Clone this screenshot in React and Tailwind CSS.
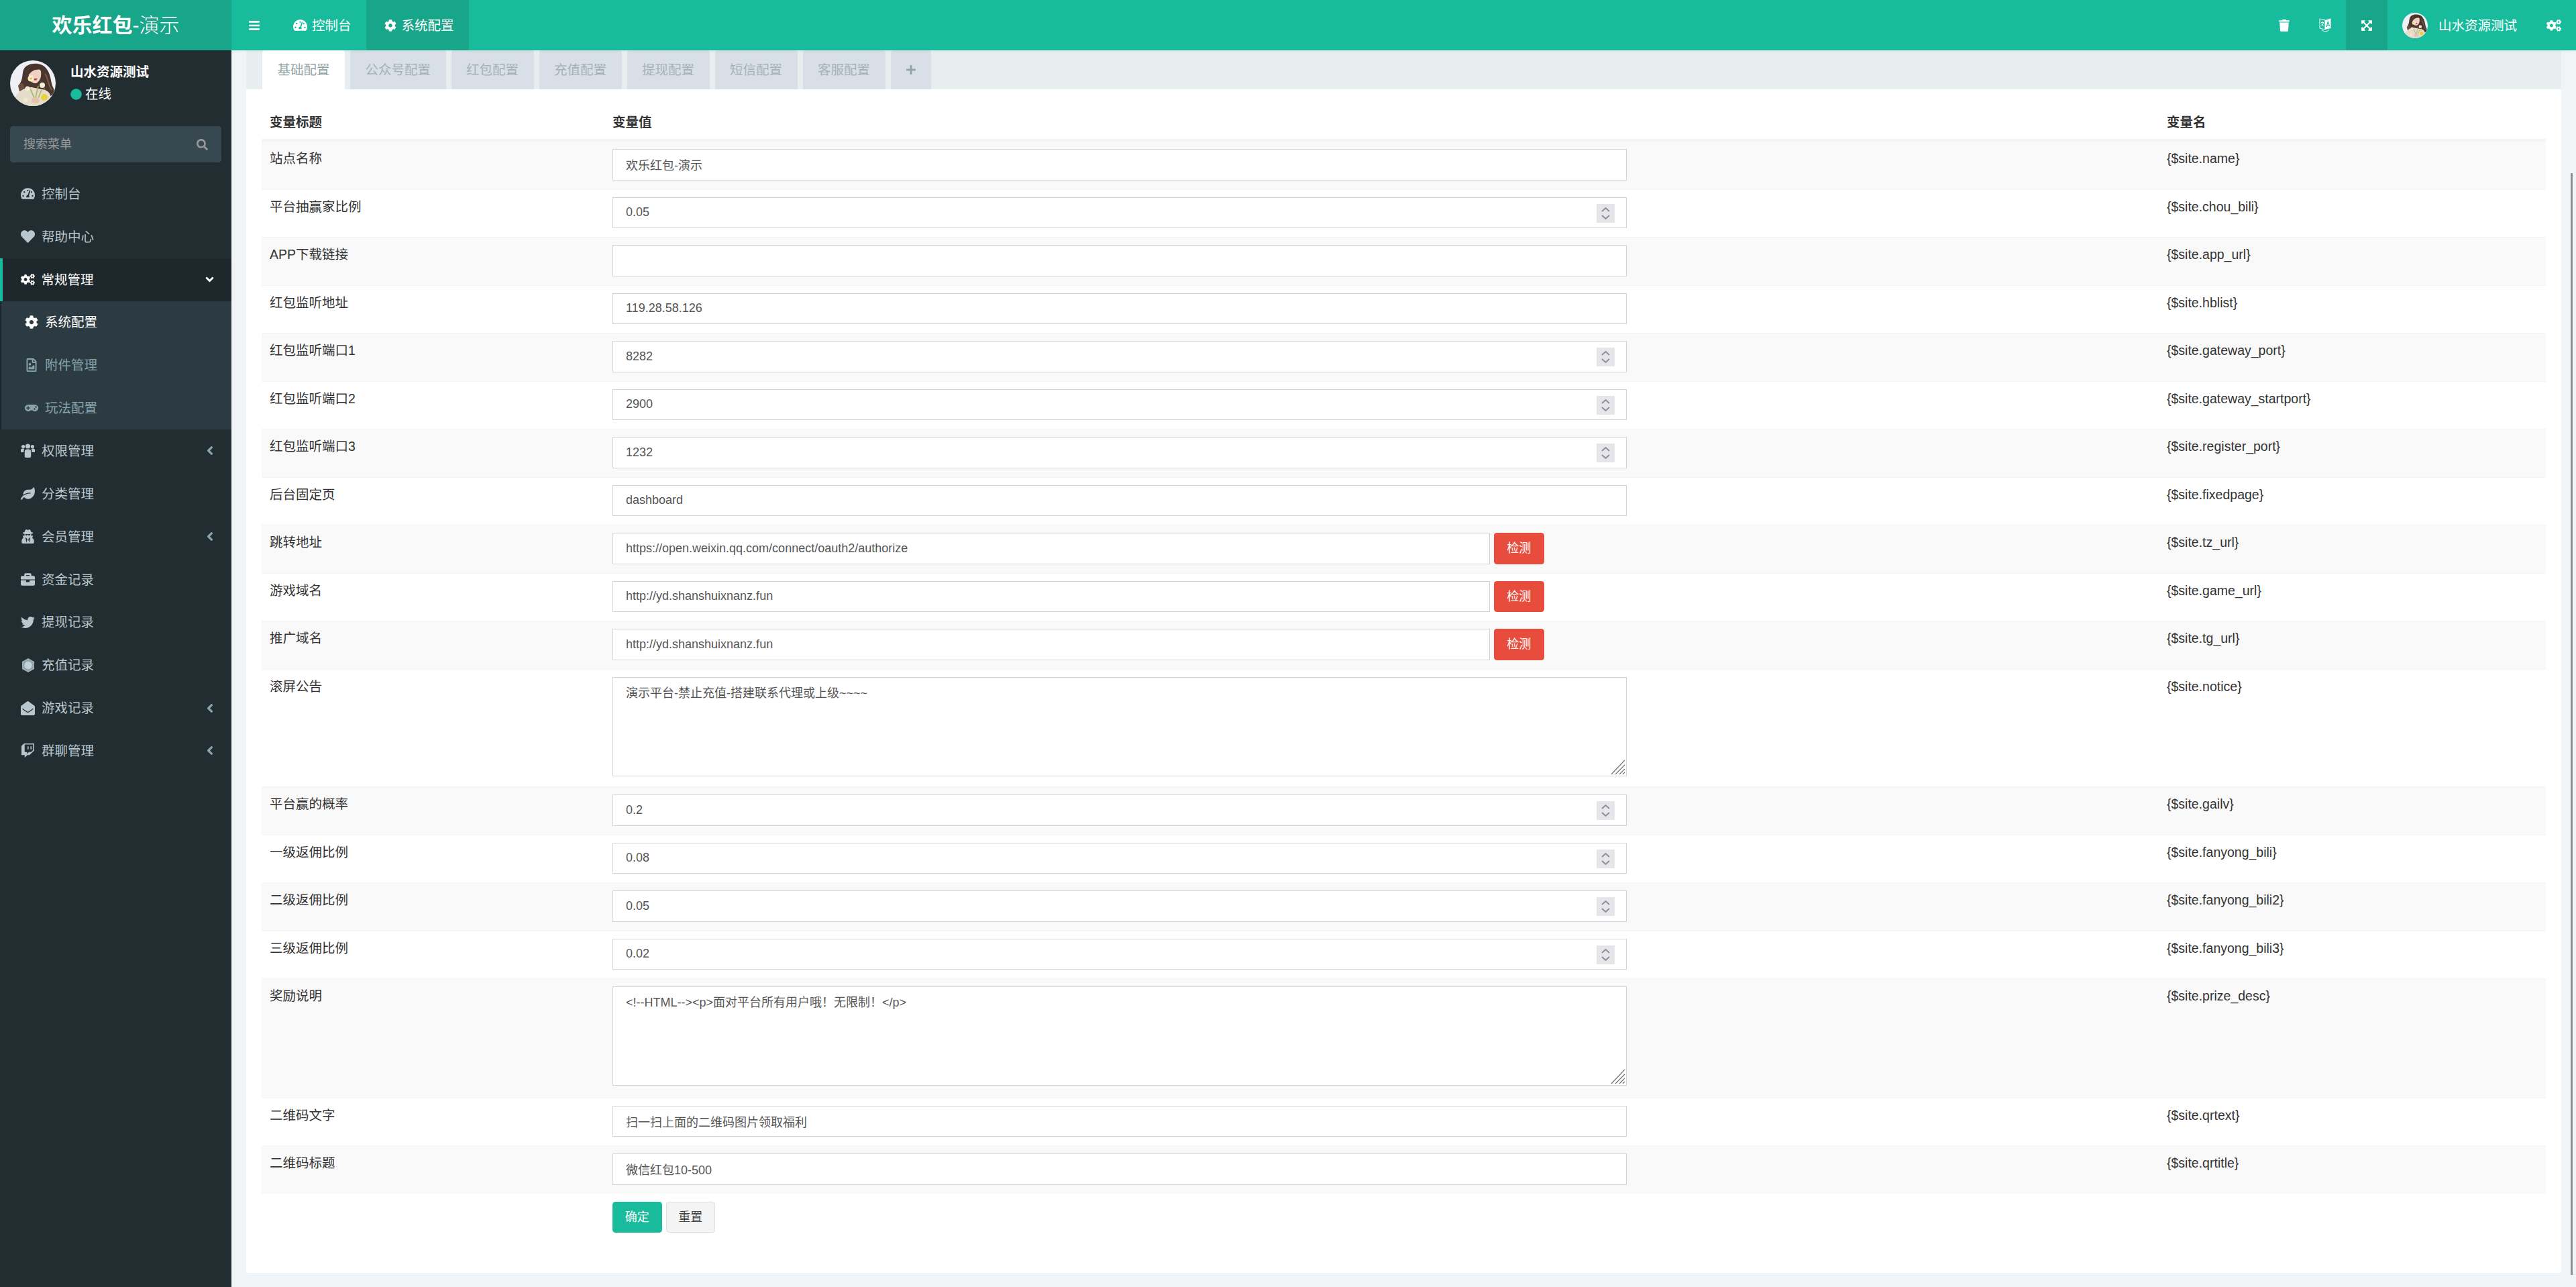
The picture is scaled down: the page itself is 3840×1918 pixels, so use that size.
import {
  FaAngleDown,
  FaAngleLeft,
  FaBars,
  FaBriefcase,
  FaCircle,
  FaCog,
  FaCogs,
  FaEnvelopeOpen,
  FaExpandArrowsAlt,
  FaGamepad,
  FaHeart,
  FaLeaf,
  FaPlus,
  FaRegFileImage,
  FaSearch,
  FaTachometerAlt,
  FaTrash,
  FaTwitch,
  FaTwitter,
  FaUserSecret,
} from 'react-icons/fa';

const HexIcon = () => (
  <svg viewBox="0 0 18 21" className="h-[21px] w-[18px]">
    <path d="M9 0 L18 5 L18 16 L9 21 L0 16 L0 5 Z" fill="#9fb0b8" />
    <circle cx="9" cy="10.5" r="7" fill="none" stroke="#7f8f97" strokeWidth="1.4" strokeDasharray="1.4 1.2" />
    <circle cx="9" cy="10.5" r="5.5" fill="#c3d1d8" />
  </svg>
);

const GroupIcon = () => (
  <svg viewBox="0 0 21 21" fill="currentColor" className="h-[21px] w-[21px]">
    <circle cx="3.6" cy="4.6" r="2.6" />
    <circle cx="17.4" cy="4.6" r="2.6" />
    <circle cx="10.5" cy="4" r="3.6" />
    <path d="M0 9.5 C0 8 1.5 7.6 3.4 7.6 C4.2 7.6 4.8 7.8 5.3 8.1 C4.6 9.2 4.4 10.6 4.4 13 H1 C0.4 13 0 12.6 0 12 Z" />
    <path d="M21 9.5 C21 8 19.5 7.6 17.6 7.6 C16.8 7.6 16.2 7.8 15.7 8.1 C16.4 9.2 16.6 10.6 16.6 13 H20 C20.6 13 21 12.6 21 12 Z" />
    <path d="M5.8 12 C5.8 9.5 7 8.4 10.5 8.4 C14 8.4 15.2 9.5 15.2 12 V19 C15.2 20.2 14.4 21 13.2 21 H7.8 C6.6 21 5.8 20.2 5.8 19 Z" />
  </svg>
);

const LangIcon = () => (
  <svg viewBox="0 0 18 21" className="h-[21px] w-[18px]">
    <path d="M9 3 L1 1 V15 L9 17 Z" fill="none" stroke="#fff" strokeWidth="1" />
    <path d="M3 6.5 H7 M5 5 V6.5 M6.5 6.5 C6 9.5 4.5 11 3 12 M3.8 8 C4.5 10 5.8 11.3 7.2 12" fill="none" stroke="#fff" strokeWidth="0.9" />
    <path d="M9 3 L17.5 0.5 V15 L9 17 Z" fill="#fff" />
    <path d="M11 13 L13.3 5.5 L15.6 12 M12 10.5 H15" fill="none" stroke="#18bc9c" strokeWidth="1.2" />
    <path d="M4 17.5 C7 20.5 12 20.5 15 17.5" fill="none" stroke="#fff" strokeWidth="1" />
  </svg>
);

const Portrait = ({ size }) => (
  <div style={{ width: size, height: size }} className="shrink-0 overflow-hidden rounded-full bg-[#eef0f6]">
    <svg viewBox="0 0 68 68" className="h-full w-full blur-[0.7px]">
      <path d="M20 14 C24 3 46 1 54 12 C62 22 60 34 65 42 C67 50 60 56 52 54 L22 46 C16 42 12 38 16 32 C19 26 18 20 20 14 Z" fill="#4a362d" />
      <path d="M12 38 C14 34 18 32 20 36 C23 42 18 48 14 46 Z" fill="#6b5040" />
      <path d="M52 20 C58 28 56 36 62 44 M48 34 C52 40 50 46 56 52" stroke="#7a5c48" strokeWidth="2" fill="none" />
      <path d="M27 14 C32 8 44 10 46 16 C47 24 45 31 39 34 C33 35 29 30 28 25 Z" fill="#efd0c2" />
      <path d="M27 14 C33 6 44 6 49 14 C44 13 36 13 32 17 C30 19 29 20 27 22 Z" fill="#4a342c" />
      <path d="M35 27 H41 L39 29.5 H36 Z" fill="#c6303a" />
      <path d="M8 54 C14 44 24 40 32 40 L52 44 C58 46 62 52 60 58 L50 68 H18 Z" fill="#e6dcca" />
      <path d="M30 42 L36 56 M42 38 L38 56 M47 44 L42 56" stroke="#a8b66c" strokeWidth="1.6" fill="none" />
      <circle cx="31" cy="27" r="4.6" fill="#f8efcf" />
      <circle cx="31" cy="27" r="1.8" fill="#e8bd4a" />
      <circle cx="48" cy="37" r="4" fill="#f6efd8" />
      <circle cx="26" cy="42" r="3.6" fill="#f4ead6" />
      <circle cx="23" cy="59" r="3.4" fill="#f2e6d4" />
      <circle cx="51" cy="55" r="5" fill="#e8cf3e" />
      <path d="M33 56 C38 54 44 56 44 61 C42 65 36 65 32 62 Z" fill="#e7c3ae" />
    </svg>
  </div>
);

const menu = [
  { label: '控制台', icon: FaTachometerAlt },
  { label: '帮助中心', icon: FaHeart },
  { label: '常规管理', icon: FaCogs, open: true },
  { label: '权限管理', icon: GroupIcon, more: true },
  { label: '分类管理', icon: FaLeaf },
  { label: '会员管理', icon: FaUserSecret, more: true },
  { label: '资金记录', icon: FaBriefcase },
  { label: '提现记录', icon: FaTwitter },
  { label: '充值记录', icon: HexIcon },
  { label: '游戏记录', icon: FaEnvelopeOpen, more: true },
  { label: '群聊管理', icon: FaTwitch, more: true },
];

const subMenu = [
  { label: '系统配置', icon: FaCog, active: true },
  { label: '附件管理', icon: FaRegFileImage },
  { label: '玩法配置', icon: FaGamepad },
];

const tabs = ['基础配置', '公众号配置', '红包配置', '充值配置', '提现配置', '短信配置', '客服配置'];

const shan = 'http://yd.shanshuixnanz.fun';

const rows = [
  { title: '站点名称', value: '欢乐红包-演示', name: '{$site.name}' },
  { title: '平台抽赢家比例', value: '0.05', name: '{$site.chou_bili}', type: 'number' },
  { title: 'APP下载链接', value: '', name: '{$site.app_url}' },
  { title: '红包监听地址', value: '119.28.58.126', name: '{$site.hblist}' },
  { title: '红包监听端口1', value: '8282', name: '{$site.gateway_port}', type: 'number' },
  { title: '红包监听端口2', value: '2900', name: '{$site.gateway_startport}', type: 'number' },
  { title: '红包监听端口3', value: '1232', name: '{$site.register_port}', type: 'number' },
  { title: '后台固定页', value: 'dashboard', name: '{$site.fixedpage}' },
  { title: '跳转地址', value: 'https://open.weixin.qq.com/connect/oauth2/authorize', name: '{$site.tz_url}', type: 'check' },
  { title: '游戏域名', value: shan, name: '{$site.game_url}', type: 'check' },
  { title: '推广域名', value: shan, name: '{$site.tg_url}', type: 'check' },
  { title: '滚屏公告', value: '演示平台-禁止充值-搭建联系代理或上级~~~~', name: '{$site.notice}', type: 'textarea', height: 'h-[175.5px]' },
  { title: '平台赢的概率', value: '0.2', name: '{$site.gailv}', type: 'number' },
  { title: '一级返佣比例', value: '0.08', name: '{$site.fanyong_bili}', type: 'number' },
  { title: '二级返佣比例', value: '0.05', name: '{$site.fanyong_bili2}', type: 'number' },
  { title: '三级返佣比例', value: '0.02', name: '{$site.fanyong_bili3}', type: 'number' },
  { title: '奖励说明', value: '<!--HTML--><p>面对平台所有用户哦！无限制！</p>', name: '{$site.prize_desc}', type: 'textarea', height: 'h-[177.5px]' },
  { title: '二维码文字', value: '扫一扫上面的二维码图片领取福利', name: '{$site.qrtext}' },
  { title: '二维码标题', value: '微信红包10-500', name: '{$site.qrtitle}' },
];

const inputClass = 'block h-[46.5px] w-full border border-[#cfd3dd] bg-white px-[19px] text-[18px] text-[#555] outline-none';

const Field = ({ row }) => {
  if (row.type === 'textarea') {
    return (
      <div className="relative h-[148px] w-[1512px]">
        <textarea
          readOnly
          defaultValue={row.value}
          className="block h-full w-full resize-none border border-[#cfd3dd] bg-white px-[19px] py-[9px] text-[18px] text-[#555] outline-none"
        />
        <svg viewBox="0 0 21 22" className="absolute right-[3px] bottom-[3px] h-[22px] w-[21px]" stroke="#6b6b6b" strokeWidth="1.2">
          <path d="M1 22 L21 1 M7 22 L21 8 M13 22 L21 14 M18 22 L21 19" />
        </svg>
      </div>
    );
  }
  if (row.type === 'check') {
    return (
      <div className="flex w-[1388.5px] gap-[6px]">
        <input readOnly defaultValue={row.value} className={inputClass} />
        <button type="button" className="h-[46.5px] w-[74.5px] shrink-0 rounded-[4.5px] bg-[#e74c3c] text-[18px] text-white">
          检测
        </button>
      </div>
    );
  }
  return (
    <div className="relative w-[1512px]">
      <input readOnly defaultValue={row.value} className={inputClass} />
      {row.type === 'number' && (
        <span className="absolute top-[10px] right-[18px] h-[28px] w-[27px] bg-[#e6e6ea]">
          <svg viewBox="0 0 27 28" className="h-full w-full" fill="none" stroke="#8f8c99" strokeWidth="2">
            <path d="M8 11 L13.5 6 L19 11 M8 17 L13.5 22 L19 17" />
          </svg>
        </span>
      )}
    </div>
  );
};

const Header = () => (
  <header className="relative z-10 flex h-[75px] shrink-0 bg-[#18bc9c] text-white shadow-[0_1px_4px_rgba(0,0,0,0.06)]">
    <div className="flex w-[345px] items-center justify-center bg-[#17a689] text-[30px]">
      <b>欢乐红包</b>
      <span className="font-light">-演示</span>
    </div>
    <div className="flex w-[65px] items-center pl-[25px]">
      <FaBars className="h-[18px] w-[18px]" />
    </div>
    <div className="flex items-center gap-[7px] pr-[22px] pl-[27px]">
      <FaTachometerAlt className="h-[19px] w-[21px]" />
      <span>控制台</span>
    </div>
    <div className="flex items-center gap-[8px] bg-[#17a689] pr-[22px] pl-[27px]">
      <FaCog className="h-[18px] w-[18px]" />
      <span>系统配置</span>
    </div>
    <div className="ml-auto flex">
      <div className="flex w-[62px] items-center justify-center">
        <FaTrash className="h-[18px] w-[16px]" />
      </div>
      <div className="flex w-[61px] items-center justify-center">
        <LangIcon />
      </div>
      <div className="flex w-[62px] items-center justify-center bg-[#17a689]">
        <FaExpandArrowsAlt className="h-[18px] w-[18px]" />
      </div>
      <div className="flex items-center gap-[16px] px-[22px]">
        <Portrait size={38} />
        <span>山水资源测试</span>
      </div>
      <div className="flex items-center px-[22px]">
        <FaCogs className="h-[20px] w-[22px]" />
      </div>
    </div>
  </header>
);

const Sidebar = () => (
  <aside className="w-[345px] shrink-0 bg-[#222d32]">
    <div className="flex h-[113px] items-start gap-[22px] pt-[15px] pl-[15px]">
      <Portrait size={68} />
      <div className="pt-[3px]">
        <div className="font-bold text-white">山水资源测试</div>
        <div className="mt-[5px] flex items-center gap-[5px] text-white">
          <FaCircle className="h-[17px] w-[17px] text-[#18bc9c]" />
          <span>在线</span>
        </div>
      </div>
    </div>
    <div className="mx-[15px] flex h-[54px] items-center justify-between rounded-[4.5px] bg-[#374850] pr-[20px] pl-[20px] text-[18px] text-[#999]">
      <span>搜索菜单</span>
      <FaSearch className="h-[17px] w-[17px]" />
    </div>
    <nav className="mt-[15px]">
      {menu.map((item) => {
        const Icon = item.icon;
        return (
          <div key={item.label}>
            <div
              className={
                item.open
                  ? 'flex h-[63.85px] items-center border-l-[4.5px] border-[#18bc9c] bg-[#1e282c] pr-[26px] pl-[26.5px] text-white'
                  : 'flex h-[63.85px] items-center pr-[26px] pl-[31px] text-[#b8c7ce]'
              }
            >
              <span className="flex w-[21px] justify-center">
                <Icon className="h-[21px] w-[21px]" />
              </span>
              <span className="ml-[10px]">{item.label}</span>
              {item.open && <FaAngleDown className="ml-auto h-[19px] w-[13px]" />}
              {item.more && <FaAngleLeft className="ml-auto h-[21px] w-[12px] text-[#8aa4af]" />}
            </div>
            {item.open && (
              <div className="border-l-[2px] border-[#1e282c] bg-[#2c3b41]">
                {subMenu.map((sub) => {
                  const SubIcon = sub.icon;
                  return (
                    <div
                      key={sub.label}
                      className={
                        sub.active
                          ? 'flex h-[63.85px] items-center pl-[34px] text-white'
                          : 'flex h-[63.85px] items-center pl-[34px] text-[#8aa4af]'
                      }
                    >
                      <span className="flex w-[22px] justify-center">
                        <SubIcon className="h-[20px] w-[20px]" />
                      </span>
                      <span className="ml-[9px]">{sub.label}</span>
                    </div>
                  );
                })}
              </div>
            )}
          </div>
        );
      })}
    </nav>
  </aside>
);

const App = () => {
  return (
    <div className="relative flex h-[1918px] w-[3840px] flex-col overflow-hidden bg-[#f1f4f6] font-['Liberation_Sans','Noto_Sans_CJK_SC',sans-serif] text-[19.5px] leading-[28px] text-[#333]">
      <Header />
      <div className="flex flex-1">
        <Sidebar />
        <main className="w-[3473px] pl-[22px]">
          <div className="flex h-[58px] gap-[8px] bg-[#e8edf0] pl-[24px]">
            {tabs.map((tab, i) => (
              <div
                key={tab}
                className={
                  i === 0
                    ? 'flex items-center rounded-t-[4px] bg-white px-[22.5px] text-[#95a5a6]'
                    : 'flex items-center rounded-t-[4px] bg-[#d8dfe6] px-[22.5px] text-[#a7b2b6]'
                }
              >
                {tab}
              </div>
            ))}
            <div className="flex w-[60px] items-center justify-center rounded-t-[4px] bg-[#d8dfe6] text-[#95a5a6]">
              <FaPlus className="h-[16px] w-[16px]" />
            </div>
          </div>
          <div className="h-[1764px] rounded-b-[3px] bg-white px-[23px] pt-[23px]">
            <div className="grid h-[54px] grid-cols-[511px_2317px_1fr] border-b-[3px] border-[#f4f4f4] pt-[12px] font-bold">
              <div className="pl-[12px]">变量标题</div>
              <div className="pl-[12px]">变量值</div>
              <div className="pl-[12px]">变量名</div>
            </div>
            {rows.map((row, i) => (
              <div
                key={row.name}
                className={`grid grid-cols-[511px_2317px_1fr] border-t border-[#f4f4f4] pt-[11px] ${row.height || 'h-[71.5px]'} ${i % 2 === 0 ? 'bg-[#f9f9f9]' : 'bg-white'}`}
              >
                <div className="pl-[12px]">{row.title}</div>
                <div className="pl-[12px]">
                  <Field row={row} />
                </div>
                <div className="pl-[12px]">{row.name}</div>
              </div>
            ))}
            <div className="flex gap-[6px] pt-[12.5px] pl-[523px]">
              <button type="button" className="h-[46px] w-[73.5px] rounded-[4.5px] bg-[#18bc9c] text-[18px] text-white">
                确定
              </button>
              <button type="button" className="h-[46px] w-[73.5px] rounded-[4.5px] border border-[#ddd] bg-[#f4f4f4] text-[18px] text-[#444]">
                重置
              </button>
            </div>
          </div>
        </main>
      </div>
      <div className="absolute top-[258px] right-[5px] h-[1642px] w-[3px] bg-[#8f8f8f]" />
    </div>
  );
};

export default App;
